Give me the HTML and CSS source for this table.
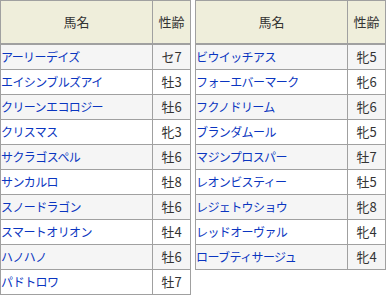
FILE: index.html
```html
<!DOCTYPE html>
<html lang="ja">
<head>
<meta charset="utf-8">
<link rel="stylesheet" href="styles.css">
</head>
<body>
<div class="wrap">
  <table class="horses">
    <colgroup><col class="c-name"><col class="c-age"></colgroup>
    <thead><tr><th>馬名</th><th>性齢</th></tr></thead>
    <tbody>
      <tr><td class="name"><a href="#">アーリーデイズ</a></td><td class="age">セ7</td></tr>
      <tr><td class="name"><a href="#">エイシンブルズアイ</a></td><td class="age">牡3</td></tr>
      <tr><td class="name"><a href="#">クリーンエコロジー</a></td><td class="age">牡6</td></tr>
      <tr><td class="name"><a href="#">クリスマス</a></td><td class="age">牝3</td></tr>
      <tr><td class="name"><a href="#">サクラゴスペル</a></td><td class="age">牡6</td></tr>
      <tr><td class="name"><a href="#">サンカルロ</a></td><td class="age">牡8</td></tr>
      <tr><td class="name"><a href="#">スノードラゴン</a></td><td class="age">牡6</td></tr>
      <tr><td class="name"><a href="#">スマートオリオン</a></td><td class="age">牡4</td></tr>
      <tr><td class="name"><a href="#">ハノハノ</a></td><td class="age">牡6</td></tr>
      <tr><td class="name"><a href="#">パドトロワ</a></td><td class="age">牡7</td></tr>
    </tbody>
  </table>
  <table class="horses">
    <colgroup><col class="c-name"><col class="c-age"></colgroup>
    <thead><tr><th>馬名</th><th>性齢</th></tr></thead>
    <tbody>
      <tr><td class="name"><a href="#">ビウイッチアス</a></td><td class="age">牝5</td></tr>
      <tr><td class="name"><a href="#">フォーエバーマーク</a></td><td class="age">牝6</td></tr>
      <tr><td class="name"><a href="#">フクノドリーム</a></td><td class="age">牝6</td></tr>
      <tr><td class="name"><a href="#">ブランダムール</a></td><td class="age">牝5</td></tr>
      <tr><td class="name"><a href="#">マジンプロスパー</a></td><td class="age">牡7</td></tr>
      <tr><td class="name"><a href="#">レオンビスティー</a></td><td class="age">牡5</td></tr>
      <tr><td class="name"><a href="#">レジェトウショウ</a></td><td class="age">牝8</td></tr>
      <tr><td class="name"><a href="#">レッドオーヴァル</a></td><td class="age">牝4</td></tr>
      <tr><td class="name"><a href="#">ローブティサージュ</a></td><td class="age">牝4</td></tr>
    </tbody>
  </table>
</div>
</body>
</html>
```
FILE: styles.css
```css
html, body {
  margin: 0;
  padding: 0;
  background: #ffffff;
}
body {
  font-family: "Noto Sans CJK JP", "Noto Sans", sans-serif;
  font-size: 12px;
  color: #333333;
}
.wrap {
  display: flex;
  align-items: flex-start;
  gap: 4px;
}
.horses {
  border-collapse: separate;
  border-spacing: 0;
  table-layout: fixed;
  width: 191px;
  border-top: 1px solid #a0a0a0;
  border-left: 1px solid #a0a0a0;
}
.c-name { width: 152px; }
.c-age { width: 38px; }
.horses th,
.horses td {
  padding: 0;
  border-right: 1px solid #a0a0a0;
  border-bottom: 1px solid #a0a0a0;
  white-space: nowrap;
  overflow: hidden;
}
.horses th {
  height: 42px;
  border-bottom-width: 2px;
  background: #efeedb;
  font-weight: normal;
  font-size: 13px;
  color: #333333;
  text-align: center;
  line-height: 16px;
}
.horses td {
  height: 24px;
  line-height: 16px;
}
.horses tbody tr:nth-child(odd) td { background: #f5f5f5; }
.horses tbody tr:nth-child(even) td { background: #ffffff; }
.name { padding-left: 4px; text-align: left; }
.name a {
  color: #0a35c0;
  text-decoration: none;
  letter-spacing: -0.6px;
}
.age {
  text-align: center;
  font-size: 13px;
}
```
